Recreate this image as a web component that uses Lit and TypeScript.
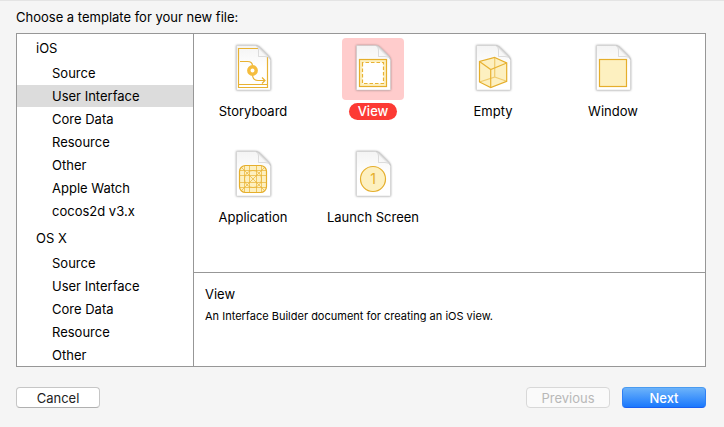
import { LitElement, html, svg, css } from "lit";
import { customElement, state } from "lit/decorators.js";

const groups = [
  {
    name: "iOS",
    items: ["Source", "User Interface", "Core Data", "Resource", "Other", "Apple Watch", "cocos2d v3.x"],
  },
  {
    name: "OS X",
    items: ["Source", "User Interface", "Core Data", "Resource", "Other"],
  },
];

const art = {
  storyboard: svg`
    <path class="line" d="M36 10.5H16.5V49.5H45.5V19M16.5 46.5H45.5"/>
    <path class="line" d="M18 23.5H25.5Q30.5 23.5 30.5 28M30.5 37Q31 42.5 36 42.5H43M40 39.5L43 42.5L40 45.5"/>
    <circle cx="30.5" cy="32.5" r="3.7" fill="#fff" stroke="#f5bd3e" stroke-width="3.4"/>`,
  view: svg`
    <rect class="shape" x="17.5" y="21.5" width="27" height="27"/>
    <rect x="20.5" y="24.5" width="21" height="21" fill="#fff"/>
    <path class="line" stroke-dasharray="3.5 2" d="M20.5 27V24.5H41.5V45.5H20.5V27"/>`,
  empty: svg`
    <path class="shape" d="M32.7 19.5L44.7 25V43.3L28.7 49.5L17.5 44V23.5Z"/>
    <path class="line faint" d="M32.7 19.5V39L17.5 44M32.7 39L44.7 43.3"/>
    <path class="line" d="M17.5 23.5L28.7 31.5L44.7 25M28.7 31.5V49.5"/>`,
  window: svg`<rect class="shape" x="17.5" y="21.5" width="27" height="27"/>`,
  application: svg`
    <rect class="shape" x="17.5" y="21.5" width="27" height="27" rx="6"/>
    <path class="line thin" d="M22.5 21.5V48.5M27.5 21.5V48.5M34.5 21.5V48.5M39.5 21.5V48.5M17.5 26.5H44.5M17.5 31.5H44.5M17.5 38.5H44.5M17.5 43.5H44.5M19 23L43 47M43 23L19 47"/>
    <circle class="line thin" cx="31" cy="35" r="8.5"/>`,
  launch: svg`
    <circle class="shape" cx="31" cy="35" r="12.5"/>
    <text x="31" y="40" text-anchor="middle">1</text>`,
};

const templates: { name: string; icon: keyof typeof art }[] = [
  { name: "Storyboard", icon: "storyboard" },
  { name: "View", icon: "view" },
  { name: "Empty", icon: "empty" },
  { name: "Window", icon: "window" },
  { name: "Application", icon: "application" },
  { name: "Launch Screen", icon: "launch" },
];

@customElement("template-icon")
class TemplateIcon extends LitElement {
  static properties = { name: { type: String } };
  declare name: keyof typeof art;

  static styles = css`
    :host { display: block; width: 62px; height: 62px; }
    svg { display: block; width: 100%; height: 100%; }
    .sheet { filter: drop-shadow(0 0 1px #0006); }
    .line { fill: none; stroke: #e8b233; stroke-width: 1.2; }
    .thin { stroke-width: 0.7; }
    .faint { opacity: 0.6; }
    .shape { fill: #fdf0c0; stroke: #e5ae2b; stroke-width: 1.2; }
    text { font: 14px Inter, "Liberation Sans", sans-serif; fill: #e5ae2b; }
  `;

  render() {
    return html`<svg viewBox="0 0 62 62" aria-hidden="true">
      <defs>
        <linearGradient id="paper" x1="0" y1="0" x2="0" y2="1">
          <stop offset="0" stop-color="#f4f4f4"/><stop offset=".5" stop-color="#fff"/>
        </linearGradient>
        <linearGradient id="fold" x1="0" y1="1" x2="1" y2="0">
          <stop offset="0" stop-color="#fff"/><stop offset=".45" stop-color="#f6f6f6"/><stop offset=".6" stop-color="#c4c4c4"/>
        </linearGradient>
      </defs>
      <path class="sheet" fill="url(#paper)" stroke="#ccc" stroke-width=".5" d="M14.5 7.5H33Q36 7.5 38 9.5L46 17.5Q48.5 20 48.5 22.5V52H14.5Z"/>
      ${art[this.name]}
      <path fill="url(#fold)" stroke="#c8c8c8" stroke-width=".6" d="M34 7.5Q36.5 8.5 36.5 12V18.5H43Q47.5 18.5 48.5 21.5Q48 19.5 46 17.5L38 9.5Q36 7.5 34 7.5Z"/>
    </svg>`;
  }
}

@customElement("app-root")
class AppRoot extends LitElement {
  @state() category = "iOS/User Interface";
  @state() template = "View";

  static styles = css`
    :host {
      display: flex;
      flex-direction: column;
      box-sizing: border-box;
      min-height: 100vh;
      padding: 8px 18px 19px 16px;
      border-top: 1px solid #e4e4e4;
      background: #f5f5f5;
      color: #000;
      font: 13px/16px Inter, "Liberation Sans", sans-serif;
    }
    button { font: inherit; color: inherit; border: 0; padding: 0; background: none; }
    h1, h2, h3, p, ul { margin: 0; padding: 0; font-size: inherit; font-weight: 400; }
    ul { list-style: none; }
    h1 { margin-bottom: 8px; }
    .chooser {
      flex: 1 1 320px;
      display: grid;
      grid-template-columns: 177px 1fr;
      border: 1px solid #979797;
      background: #fff;
    }
    .sidebar {
      border-right: 1px solid #979797;
      height: 0;
      min-height: 100%;
      overflow-y: auto;
      scrollbar-width: none;
    }
    .group + .group { padding-top: 1px; }
    .group h2 { padding-left: 19px; line-height: 28px; }
    .category {
      display: block;
      width: 100%;
      height: 22px;
      margin-bottom: 1px;
      padding-left: 35px;
      text-align: left;
    }
    .category.selected { background: #dcdcdc; }
    .content { display: flex; flex-direction: column; }
    .templates {
      flex: 1;
      display: grid;
      grid-template-columns: repeat(auto-fill, 118px);
      align-content: start;
      gap: 24px 2px;
      padding-top: 4px;
    }
    .template { display: flex; flex-direction: column; align-items: center; gap: 3px; width: 100%; }
    .template .label { line-height: 17px; padding: 0 9px; border-radius: 9px; white-space: nowrap; }
    .template.selected template-icon { background: #fcc; border-radius: 4px; }
    .template.selected .label { background: #fc3a34; color: #fff; font-weight: 500; }
    .detail {
      box-sizing: border-box;
      min-height: 94px;
      padding: 13px 11px;
      border-top: 1px solid #979797;
    }
    .detail p { margin-top: 6px; font-size: 11px; }
    .actions { display: flex; gap: 12px; margin-top: 20px; }
    .action {
      width: 84px;
      height: 21px;
      border: 1px solid #c6c6c6;
      border-bottom-color: #b0b0b0;
      border-radius: 4px;
      background: #fff;
      color: #222;
    }
    .action:first-child { margin-right: auto; }
    .action:disabled { background: #fafafa; border-color: #d8d8d8; color: #b8b8b8; }
    .action.primary {
      border-color: #4a9bf0 #2f80f5 #1a5ff0;
      background: linear-gradient(#6cb3fa, #1a78fd);
      color: #fff;
      font-weight: 500;
    }
  `;

  render() {
    return html`
      <h1>Choose a template for your new file:</h1>
      <main class="chooser">
        <nav class="sidebar" aria-label="Categories">
          ${groups.map((g) => html`<section class="group">
            <h2>${g.name}</h2>
            <ul>${g.items.map((item) => {
              const key = `${g.name}/${item}`;
              return html`<li><button
                class="category ${key === this.category ? "selected" : ""}"
                @click=${() => (this.category = key)}>${item}</button></li>`;
            })}</ul>
          </section>`)}
        </nav>
        <div class="content">
          <ul class="templates">
            ${templates.map((t) => html`<li><button
              class="template ${t.name === this.template ? "selected" : ""}"
              aria-pressed=${t.name === this.template}
              @click=${() => (this.template = t.name)}>
                <template-icon .name=${t.icon}></template-icon>
                <span class="label">${t.name}</span>
              </button></li>`)}
          </ul>
          <section class="detail">
            <h3>View</h3>
            <p>An Interface Builder document for creating an iOS view.</p>
          </section>
        </div>
      </main>
      <footer class="actions">
        <button class="action">Cancel</button>
        <button class="action" disabled>Previous</button>
        <button class="action primary">Next</button>
      </footer>
    `;
  }
}
